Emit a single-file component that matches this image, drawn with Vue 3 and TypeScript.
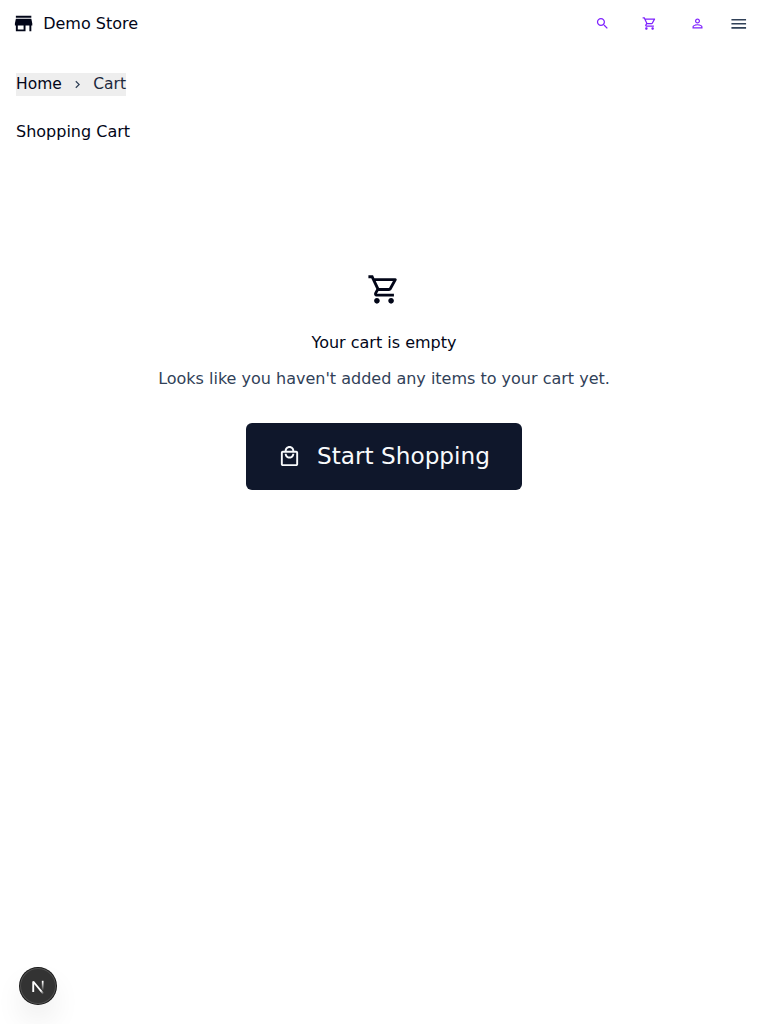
<script setup lang="ts">
const cartPath =
  'M15.55 13c.75 0 1.41-.41 1.75-1.03l3.58-6.49c.37-.66-.11-1.48-.87-1.48H5.21l-.94-2H1v2h2l3.6 7.59-1.35 2.44C4.52 15.37 5.48 17 7 17h12v-2H7l1.1-2h7.45zM6.16 6h12.15l-2.76 5H8.53L6.16 6zM7 18c-1.1 0-1.99.9-1.99 2S5.9 22 7 22s2-.9 2-2-.9-2-2-2zm10 0c-1.1 0-1.99.9-1.99 2s.89 2 1.99 2 2-.9 2-2-.9-2-2-2z'

const actions: { label: string; path: string }[] = [
  {
    label: 'Search',
    path: 'M15.5 14h-.79l-.28-.27C15.41 12.59 16 11.11 16 9.5 16 5.91 13.09 3 9.5 3S3 5.91 3 9.5 5.91 16 9.5 16c1.61 0 3.09-.59 4.23-1.57l.27.28v.79l5 4.99L20.49 19l-4.99-5zm-6 0C7.01 14 5 11.99 5 9.5S7.01 5 9.5 5 14 7.01 14 9.5 11.99 14 9.5 14z',
  },
  { label: 'Cart', path: cartPath },
  {
    label: 'Account',
    path: 'M12 5.9c1.16 0 2.1.94 2.1 2.1s-.94 2.1-2.1 2.1S9.9 9.16 9.9 8s.94-2.1 2.1-2.1m0 9c2.97 0 6.1 1.46 6.1 2.1v1.1H5.9V17c0-.64 3.13-2.1 6.1-2.1M12 4C9.79 4 8 5.79 8 8s1.79 4 4 4 4-1.79 4-4-1.79-4-4-4zm0 9c-2.67 0-8 1.34-8 4v3h16v-3c0-2.66-5.33-4-8-4z',
  },
]
</script>

<template>
  <div class="page">
    <header class="header">
      <a class="brand">
        <svg class="brand-icon" viewBox="0 0 24 24"><path d="M20 4H4v2h16V4zm1 10v-2l-1-5H4l-1 5v2h1v6h10v-6h4v6h2v-6h1zm-9 4H6v-4h6v4z" /></svg>
        <span>Demo Store</span>
      </a>
      <nav class="actions">
        <button v-for="a in actions" :key="a.label" class="action" :aria-label="a.label">
          <svg viewBox="0 0 24 24"><path :d="a.path" /></svg>
        </button>
        <button class="menu" aria-label="Menu">
          <svg viewBox="0 0 24 24"><path d="M3 18h18v-2H3v2zm0-5h18v-2H3v2zm0-7v2h18V6H3z" /></svg>
        </button>
      </nav>
    </header>

    <main class="main">
      <nav class="crumbs">
        <a class="home">Home</a>
        <svg viewBox="0 0 24 24"><path d="M10 6 8.59 7.41 13.17 12l-4.58 4.59L10 18l6-6z" /></svg>
        <span>Cart</span>
      </nav>
      <h1>Shopping Cart</h1>

      <section class="empty">
        <svg class="empty-icon" viewBox="0 0 24 24"><path :d="cartPath" /></svg>
        <h2>Your cart is empty</h2>
        <p>Looks like you haven't added any items to your cart yet.</p>
        <button class="cta">
          <svg viewBox="0 0 24 24"><path d="M19 6h-2c0-2.76-2.24-5-5-5S7 3.24 7 6H5c-1.1 0-1.99.9-1.99 2L3 20c0 1.1.9 2 2 2h14c1.1 0 2-.9 2-2V8c0-1.1-.9-2-2-2zm-7-3c1.66 0 3 1.34 3 3H9c0-1.66 1.34-3 3-3zm7 17H5V8h14v12zm-7-8c-1.66 0-3-1.34-3-3H7c0 2.76 2.24 5 5 5s5-2.24 5-5h-2c0 1.66-1.34 3-3 3z" /></svg>
          <span>Start Shopping</span>
        </button>
      </section>
    </main>

    <button class="dev-badge" aria-label="Developer tools">
      <svg viewBox="0 0 40 40">
        <defs>
          <linearGradient id="diag" x1="19" y1="20" x2="26.5" y2="28.5" gradientUnits="userSpaceOnUse">
            <stop offset="0.6" stop-color="#fff" />
            <stop offset="1" stop-color="#fff" stop-opacity="0" />
          </linearGradient>
          <linearGradient id="stem" x1="25" y1="13" x2="25" y2="25" gradientUnits="userSpaceOnUse">
            <stop offset="0.2" stop-color="#fff" />
            <stop offset="1" stop-color="#fff" stop-opacity="0" />
          </linearGradient>
        </defs>
        <path d="M14.7 26.6V15L26 28.8" stroke="url(#diag)" stroke-width="2.1" stroke-linejoin="bevel" />
        <path d="M25.2 14.2v11.4" stroke="url(#stem)" stroke-width="1.9" />
      </svg>
    </button>
  </div>
</template>

<style>
body {
  background: #fff;
}
</style>

<style scoped>
.page {
  min-height: 1024px;
  box-sizing: border-box;
  font-family: "DejaVu Sans", sans-serif;
  font-size: 16px;
  line-height: 24px;
  color: #020618;
}
svg {
  display: block;
  fill: currentColor;
}
button {
  margin: 0;
  padding: 0;
  border: 0;
  background: none;
  font: inherit;
  color: inherit;
}
.header {
  display: flex;
  align-items: center;
  justify-content: space-between;
  height: 47px;
  padding: 0 20px 0 12px;
  box-sizing: border-box;
}
.brand {
  display: flex;
  align-items: center;
  gap: 8px;
}
.brand-icon {
  width: 23.2px;
  height: 23.2px;
}
.actions {
  display: flex;
  align-items: center;
}
.action {
  display: flex;
  justify-content: center;
  width: 47.5px;
  color: #7f22fe;
}
.action svg {
  width: 15px;
  height: 15px;
}
.menu {
  margin-left: 7.65px;
  color: #314158;
}
.menu svg {
  width: 19.5px;
  height: 19.5px;
}
.main {
  padding: 26px 16px 0;
}
.crumbs {
  display: flex;
  align-items: center;
  width: max-content;
  height: 23px;
  gap: 8px;
  font-size: 15.5px;
  line-height: 23px;
  background: #eee;
  color: #1d293d;
}
.home {
  color: #020618;
}
.crumbs svg {
  width: 15px;
  height: 15px;
  margin-right: 0.5px;
  color: #314158;
}
h1,
h2,
p {
  margin: 0;
  font-size: 16px;
  font-weight: 400;
}
h1 {
  margin-top: 24px;
}
.empty {
  display: flex;
  flex-direction: column;
  align-items: center;
  padding-top: 128px;
}
.empty-icon {
  width: 34px;
  height: 35px;
}
h2 {
  margin-top: 24px;
}
p {
  margin-top: 12px;
  color: #314158;
}
.cta {
  display: flex;
  align-items: center;
  gap: 16px;
  height: 67px;
  margin-top: 32px;
  padding: 0 32px;
  border-radius: 6px;
  background: #0f172b;
  color: #f8fafc;
  font-size: 23.2px;
}
.cta span {
  padding-bottom: 1px;
}
.cta svg {
  width: 23px;
  height: 23px;
}
.dev-badge {
  position: fixed;
  left: 20px;
  bottom: 20px;
  width: 36px;
  height: 36px;
  border-radius: 50%;
  background: #333;
  box-shadow:
    0 0 0 1px #171717,
    inset 0 0 0 1px rgba(255, 255, 255, 0.14),
    0 16px 32px -8px rgba(0, 0, 0, 0.24);
}
.dev-badge svg {
  width: 36px;
  height: 36px;
  fill: none;
}
</style>
